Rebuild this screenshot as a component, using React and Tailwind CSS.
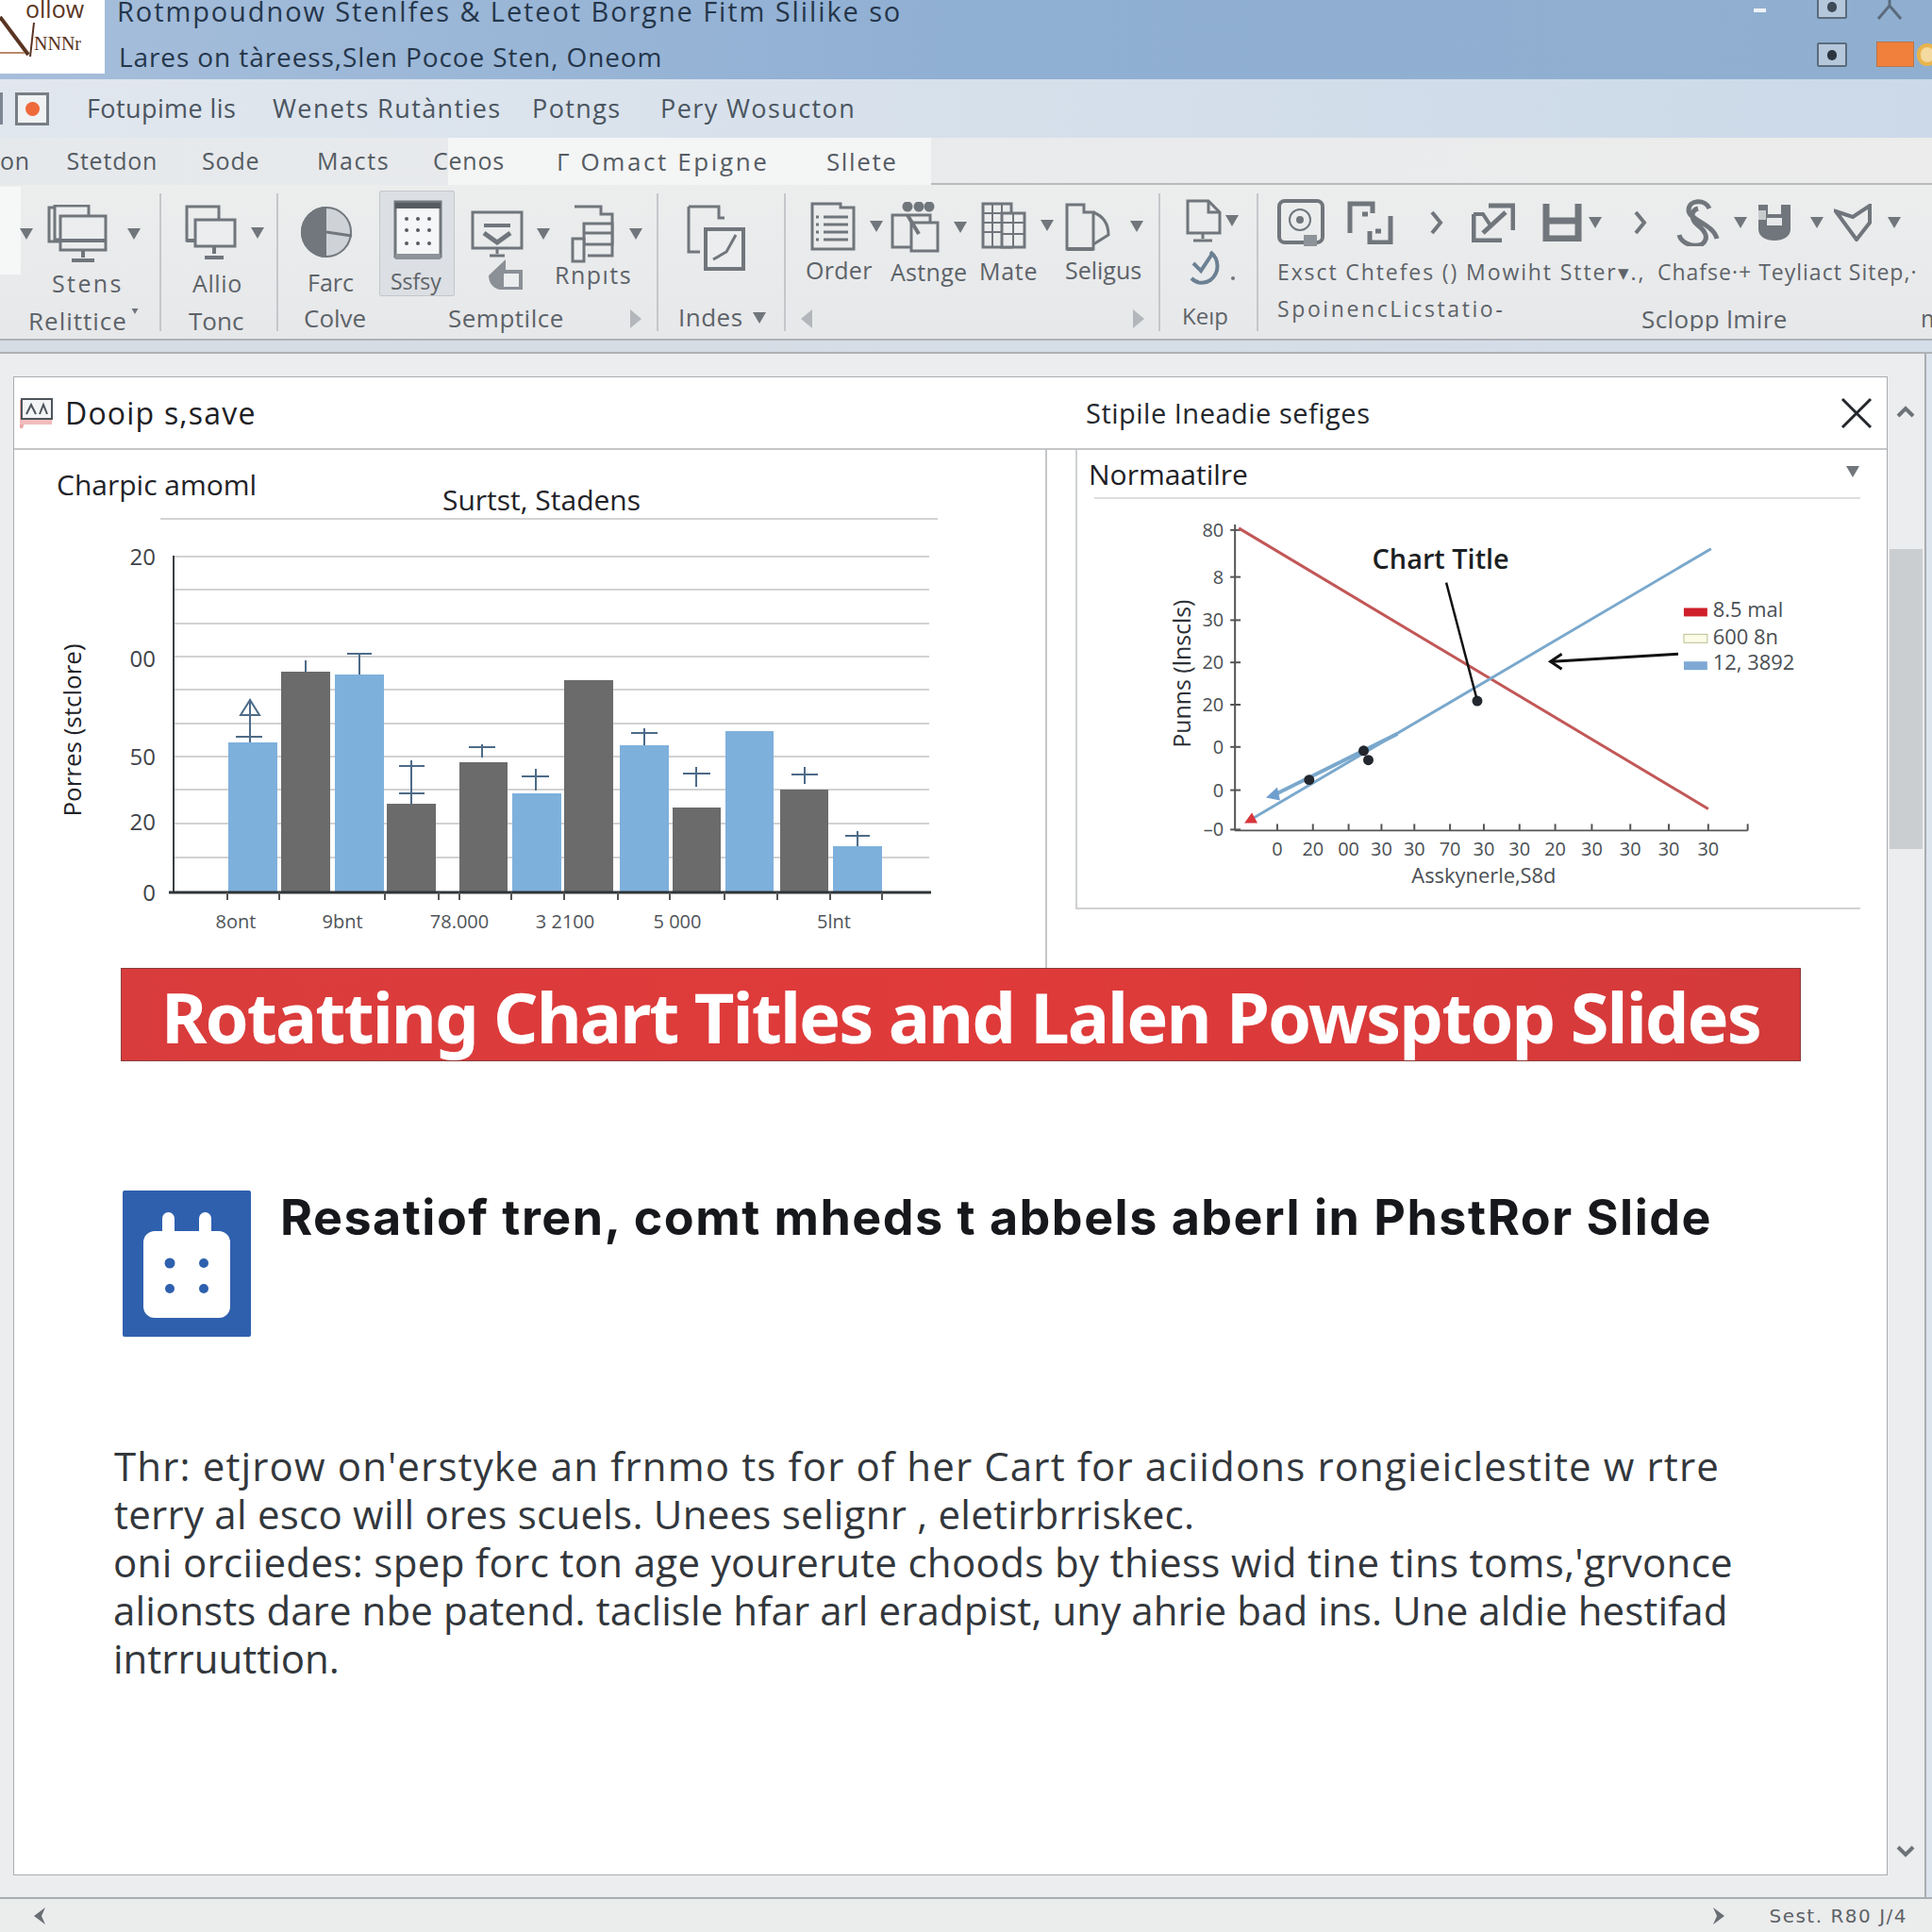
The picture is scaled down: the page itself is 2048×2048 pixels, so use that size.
import React from "react";

const Tri = ({ className = "" }) => (
  <svg width="16" height="14" viewBox="0 0 16 14" className={className}>
    <path d="M1 1h14L8 13z" fill="#70767c" />
  </svg>
);

const Ico = ({ w = 60, h = 66, children, className = "" }) => (
  <svg width={w} height={h} viewBox={`0 0 ${w} ${h}`} fill="none" stroke="#70767c" strokeWidth="3" className={className}>
    {children}
  </svg>
);

const StackMonitor = () => (
  <Ico w={64} h={62}>
    <rect x="2" y="3" width="36" height="36" />
    <rect x="8" y="1" width="36" height="36" fill="#ecedee" />
    <rect x="14" y="12" width="48" height="36" fill="#ecedee" />
    <path d="M14 38h48M38 48v8M26 59h24" strokeWidth="4" />
  </Ico>
);
const SmallMonitor = () => (
  <Ico w={56} h={60}>
    <rect x="3" y="2" width="34" height="36" />
    <rect x="12" y="16" width="42" height="28" fill="#ecedee" />
    <path d="M3 38h9M32 44v8M22 56h20" strokeWidth="4" />
  </Ico>
);
const Pie = () => (
  <svg width="56" height="58" viewBox="0 0 56 58">
    <circle cx="28" cy="29" r="27" fill="#cfd3d7" />
    <path d="M28 2a27 27 0 0 0 0 54z" fill="#71777d" />
    <path d="M28 29L55 33" stroke="#71777d" strokeWidth="3" />
    <circle cx="28" cy="29" r="26" fill="none" stroke="#71777d" strokeWidth="2" />
  </svg>
);
const Sheet = () => (
  <svg width="52" height="66" viewBox="0 0 52 66" fill="none">
    <rect x="2" y="2" width="48" height="58" fill="#f5f6f7" stroke="#70767c" strokeWidth="3" />
    <path d="M2 6h48" stroke="#555b61" strokeWidth="6" />
    <path d="M2 60h48" stroke="#8d9399" strokeWidth="6" />
    {[14, 26, 38].map((x) =>
      [20, 32, 46].map((y) => <circle key={`${x}-${y}`} cx={x} cy={y} r="2" fill="#555b61" />)
    )}
  </svg>
);
const MonitorCheck = () => (
  <Ico w={56} h={50}>
    <rect x="2" y="2" width="52" height="38" />
    <path d="M14 16h28" strokeWidth="4" />
    <path d="M14 24l14 10 14-10" strokeWidth="5" />
    <path d="M28 40v6M20 48h16" />
  </Ico>
);
const DocBox = () => (
  <Ico w={46} h={62}>
    <path d="M4 2h28v8h12v44H18" />
    <rect x="14" y="20" width="30" height="22" fill="#ecedee" />
    <path d="M14 30h30" />
    <rect x="2" y="36" width="12" height="24" fill="#ecedee" />
  </Ico>
);
const Hand = () => (
  <svg width="40" height="34" viewBox="0 0 40 34">
    <path d="M20 1L2 18c0 9 6 14 12 15h24V12H20z" fill="#8a9096" />
    <rect x="18" y="16" width="16" height="14" fill="#ecedee" />
  </svg>
);
const DocPicture = () => (
  <Ico w={62} h={72}>
    <path d="M2 2h32v12h6M2 2v48h12" />
    <rect x="20" y="26" width="40" height="42" fill="#ecedee" strokeWidth="4" />
    <path d="M28 58l14-8 10-18" strokeWidth="3" />
  </Ico>
);
const Lines = () => (
  <Ico w={48} h={52}>
    <path d="M2 2h30v4h14v44H2z" />
    <path d="M14 16h26M14 24h26M14 32h26M14 40h26M6 16h3M6 24h3M6 32h3M6 40h3" />
  </Ico>
);
const People = () => (
  <Ico w={52} h={54}>
    <circle cx="18" cy="5" r="4" fill="#70767c" />
    <circle cx="30" cy="5" r="4" fill="#70767c" />
    <circle cx="41" cy="5" r="4" fill="#70767c" />
    <rect x="2" y="14" width="40" height="34" />
    <rect x="22" y="22" width="28" height="30" fill="#ecedee" />
    <path d="M18 14l12 20" strokeWidth="4" />
  </Ico>
);
const Table = () => (
  <Ico w={48} h={50}>
    <rect x="2" y="2" width="30" height="46" />
    <path d="M2 12h30M2 22h30M2 32h30M12 2v46M22 2v46" strokeWidth="2" />
    <rect x="22" y="12" width="24" height="36" fill="#ecedee" />
    <path d="M22 22h24M22 34h24M34 12v36" strokeWidth="2" />
  </Ico>
);
const Folder = () => (
  <Ico w={50} h={52}>
    <path d="M2 50V3h18v8h10v39z" />
    <path d="M30 11c10 4 16 12 16 24l-16 10" />
    <path d="M2 50h28" strokeWidth="4" />
  </Ico>
);
const DocStand = () => (
  <Ico w={40} h={46}>
    <path d="M2 2h22l12 12v22H2z" />
    <path d="M24 2v12h12M18 36v6M8 44h20" />
  </Ico>
);
const CheckRound = () => (
  <Ico w={40} h={40}>
    <path d="M26 4c10 8 10 22 0 30-6 4-14 4-20-2" stroke="#6b8093" strokeWidth="4" />
    <path d="M8 16l8 8 12-18" stroke="#6b8093" strokeWidth="4" />
  </Ico>
);
const Target = () => (
  <Ico w={50} h={50}>
    <rect x="2" y="2" width="46" height="44" rx="6" strokeWidth="4" />
    <circle cx="24" cy="22" r="11" strokeWidth="2" />
    <circle cx="24" cy="22" r="4" fill="#70767c" stroke="none" />
    <rect x="28" y="38" width="14" height="12" fill="#8d9399" stroke="none" />
  </Ico>
);
const Corners = () => (
  <Ico w={50} h={46}>
    <path d="M3 34V3h24v10M16 14h6M46 16v28H24v-12M30 32h6" strokeWidth="5" />
  </Ico>
);
const Expand = () => (
  <Ico w={46} h={42}>
    <path d="M2 12v28h30M18 3h26v26" strokeWidth="5" />
    <path d="M12 32l24-22" strokeWidth="5" />
    <path d="M2 12h10l8 12" strokeWidth="4" />
  </Ico>
);
const HBlock = () => (
  <Ico w={42} h={40}>
    <path d="M4 0v40M38 0v40M4 18h34M4 37h34" strokeWidth="7" />
  </Ico>
);
const SCurve = () => (
  <Ico w={48} h={50}>
    <path d="M36 10C32 0 14 0 14 12c0 10 26 14 30 30M24 10c-8 2-8 12 0 18 8 6 12 14 4 20-10 4-22-2-24-10" strokeWidth="5" />
  </Ico>
);
const Shield = () => (
  <svg width="38" height="42" viewBox="0 0 38 42">
    <path d="M2 2h10v10h14V2h10v26c0 8-8 12-17 12S2 36 2 28z" fill="#70767c" />
    <rect x="11" y="16" width="16" height="8" fill="#e6e8ea" />
    <rect x="2" y="8" width="8" height="10" fill="#c8cbce" />
  </svg>
);
const Dart = () => (
  <Ico w={42} h={40}>
    <path d="M2 8l18 6L38 2v18L24 38z" strokeWidth="4" />
  </Ico>
);
const Chev = () => (
  <svg width="14" height="26" viewBox="0 0 14 26" fill="none">
    <path d="M2 2l9 11-9 11" stroke="#70767c" strokeWidth="4" />
  </svg>
);

const LeftChart = () => {
  const bars = [
    [243, 52, 786, "b"], [299, 52, 711, "g"], [356, 52, 714, "b"], [411, 52, 851, "g"],
    [488, 51, 807, "g"], [544, 52, 840, "b"], [599, 52, 720, "g"], [658, 52, 789, "b"],
    [714, 51, 855, "g"], [770, 51, 774, "b"], [828, 51, 836, "g"], [884, 52, 896, "b"],
  ];
  const grid = [589, 624, 660, 695, 730, 766, 801, 836, 872, 908];
  const errs = [
    [266, 740, 786, 780, 251, 279], [325, 699, 711, 699, 325, 325], [382, 692, 714, 692, 369, 395],
    [437, 805, 851, 811, 424, 451], [512, 788, 802, 791, 498, 526], [569, 814, 837, 822, 554, 583],
    [684, 771, 789, 776, 670, 698], [739, 812, 833, 819, 725, 754], [854, 812, 830, 820, 840, 868],
    [910, 880, 896, 885, 897, 923],
  ];
  const ticks = [242, 297, 409, 466, 488, 543, 599, 656, 711, 769, 825, 881, 936];
  const yLabels = [["20", 598], ["00", 706], ["50", 810], ["20", 879], ["0", 954]];
  const xLabels = [["8ont", 251], ["9bnt", 364], ["78.000", 488], ["3 2100", 600], ["5 000", 719], ["5lnt", 885]];
  return (
    <svg width="1095" height="550" viewBox="14 476 1095 550" className="shrink-0">
      <text x="61" y="524" fontSize="30" fill="#1f2328">Charpic amoml</text>
      <text x="575" y="540" fontSize="30" fill="#1f2328" textAnchor="middle">Surtst, Stadens</text>
      <line x1="171" y1="549" x2="995" y2="549" stroke="#d3d3d3" strokeWidth="2" />
      {grid.map((y) => <line key={y} x1="185" y1={y} x2="986" y2={y} stroke="#d2d2d2" strokeWidth="2" />)}
      {bars.map(([x, w, y, c]) => <rect key={x} x={x} y={y} width={w} height={945 - y} fill={c === "b" ? "#7eb0dc" : "#6b6b6b"} />)}
      {errs.map(([x, y1, y2, cy, cx1, cx2]) => (
        <g key={x} stroke="#4d6b88" strokeWidth="2">
          <line x1={x} y1={y1} x2={x} y2={y2} />
          <line x1={cx1} y1={cy} x2={cx2} y2={cy} />
        </g>
      ))}
      <path d="M266 741l-10 16h20z" fill="none" stroke="#4d6b88" strokeWidth="2" />
      <line x1="424" y1="840" x2="451" y2="840" stroke="#4d6b88" strokeWidth="2" />
      <line x1="185" y1="588" x2="185" y2="945" stroke="#3a3f44" strokeWidth="2" />
      <line x1="180" y1="945" x2="988" y2="945" stroke="#2f3438" strokeWidth="3" />
      {ticks.map((x) => <line key={x} x1={x} y1="945" x2={x} y2="953" stroke="#555" strokeWidth="2" />)}
      {yLabels.map(([t, y]) => <text key={y} x="166" y={y} fontSize="24" fill="#3f444a" textAnchor="end">{t}</text>)}
      {xLabels.map(([t, x]) => <text key={x} x={x} y="983" fontSize="20" fill="#4f5459" textAnchor="middle">{t}</text>)}
      <text transform="translate(87 773) rotate(-90)" fontSize="26" fill="#1f2328" textAnchor="middle">Porres (stclore)</text>
    </svg>
  );
};

const RightChart = () => {
  const yLabels = [["80", 561], ["8", 611], ["30", 657], ["20", 702], ["20", 747], ["0", 792], ["0", 838], ["–0", 880]];
  const ticks = [1353, 1391, 1429, 1464, 1499, 1537, 1573, 1611, 1649, 1688, 1729, 1770, 1812];
  const labels = ["0", "20", "00", "30", "30", "70", "30", "30", "20", "30", "30", "30", "30"];
  return (
    <svg width="830" height="435" viewBox="1142 528 830 435" className="block">
      <line x1="1308" y1="555" x2="1308" y2="881" stroke="#555" strokeWidth="2" />
      <line x1="1308" y1="881" x2="1854" y2="881" stroke="#555" strokeWidth="2" />
      <line x1="1854" y1="874" x2="1854" y2="881" stroke="#555" strokeWidth="2" />
      {yLabels.map(([t, y]) => (
        <g key={y}>
          <line x1="1303" y1={y} x2="1314" y2={y} stroke="#555" strokeWidth="2" />
          <text x="1296" y={y + 7} fontSize="20" fill="#4a4f54" textAnchor="end">{t}</text>
        </g>
      ))}
      {ticks.map((x, i) => (
        <g key={x}>
          <line x1={x} y1="874" x2={x} y2="881" stroke="#555" strokeWidth="2" />
          <text x={x} y="908" fontSize="20" fill="#4a4f54" textAnchor="middle">{labels[i]}</text>
        </g>
      ))}
      <line x1="1312" y1="559" x2="1812" y2="858" stroke="#c25757" strokeWidth="3" />
      <line x1="1327" y1="868" x2="1815" y2="581" stroke="#7aa8cc" strokeWidth="3" />
      <line x1="1350" y1="843" x2="1481" y2="778" stroke="#7aa8cc" strokeWidth="4" />
      <path d="M1341 846l12-11 3 14z" fill="#6f9fcf" />
      <path d="M1318 873l8-11 6 11z" fill="#d8363c" />
      {[[1387, 827], [1445, 796], [1450, 806], [1566, 743]].map(([x, y]) => <circle key={x} cx={x} cy={y} r="5.5" fill="#23272e" />)}
      <text x="1527" y="602" fontSize="29" fontWeight="600" fill="#1c1f23" textAnchor="middle">Chart Title</text>
      <line x1="1533" y1="617" x2="1565" y2="739" stroke="#111" strokeWidth="2.5" />
      <line x1="1780" y1="693" x2="1646" y2="701" stroke="#111" strokeWidth="3" />
      <path d="M1656 693l-12 8 12 8" fill="none" stroke="#111" strokeWidth="3" />
      <rect x="1786" y="644" width="25" height="9" fill="#cf1f2a" />
      <rect x="1786" y="672" width="25" height="9" fill="#fbfbe8" stroke="#b9c08e" strokeWidth="1" />
      <rect x="1786" y="701" width="25" height="9" fill="#7fa9d4" />
      <text x="1817" y="654" fontSize="22" fill="#4a4f54">8.5 mal</text>
      <text x="1817" y="683" fontSize="22" fill="#4a4f54">600 8n</text>
      <text x="1817" y="710" fontSize="22" fill="#4a4f54">12, 3892</text>
      <text x="1573" y="937" fontSize="22" fill="#4a4f54" textAnchor="middle">Asskynerle,S8d</text>
      <text transform="translate(1261 714) rotate(-90)" fontSize="25" fill="#2d3136" textAnchor="middle">Punns (lnscls)</text>
    </svg>
  );
};

export default function App() {
  return (
    <div className="w-[2048px] h-[2048px] overflow-hidden flex flex-col bg-[#ecedee] font-['Open_Sans',sans-serif]">
      {/* title bar */}
      <div className="h-[84px] shrink-0 flex bg-gradient-to-r from-[#a6bedb] via-[#8fafd3] to-[#90afd0] overflow-hidden">
        <div className="relative w-[111px] h-[78px] bg-white shrink-0 overflow-hidden font-['Liberation_Serif',serif] text-[#5a3422] leading-none">
          <svg width="40" height="70" viewBox="0 0 40 70" fill="none" className="absolute left-0 top-0">
            <path d="M0 18l30 40" stroke="#5a3422" strokeWidth="4" />
            <path d="M32 60L36 24" stroke="#5a3422" strokeWidth="2" />
            <path d="M0 56h26" stroke="#b98a6a" strokeWidth="2" />
          </svg>
          <div className="text-[25px] pl-[27px] -mt-[3px] font-['Open_Sans',sans-serif]">ollow</div>
          <div className="text-[20px] pl-[36px] mt-[14px]">NNNr</div>
        </div>
        <div className="pl-[13px] text-[#25364a] text-[29px] tracking-[1.9px] leading-[50px] -mt-[13px] whitespace-nowrap">
          <div>Rotmpoudnow Stenlfes &amp; Leteot Borgne Fitm Slilike so</div>
          <div className="text-[28px] leading-[46px] tracking-[0.9px] pl-[2px]">Lares on tàreess,Slen Pocoe Sten, Oneom</div>
        </div>
        <div className="ml-auto relative w-[200px]">
          <div className="absolute left-[11px] top-[9px] w-[13px] h-[4px] bg-[#eef2f6]" />
          <div className="absolute left-[78px] -top-[6px] w-[32px] h-[26px] border-2 border-[#5b6b7c] bg-[#b5c7db] rounded-[2px] flex items-center justify-center"><div className="w-[10px] h-[11px] rounded-full bg-[#3d4a58]" /></div>
          <svg className="absolute left-[140px] top-0" width="30" height="22" viewBox="0 0 30 22" fill="none"><path d="M15 0v6L3 20M15 6l12 14" stroke="#5b6b7c" strokeWidth="3" /></svg>
          <div className="absolute left-[78px] top-[45px] w-[32px] h-[26px] border-2 border-[#5b6b7c] bg-[#b5c7db] rounded-[2px] flex items-center justify-center"><div className="w-[10px] h-[11px] rounded-full bg-[#2b3540]" /></div>
          <div className="absolute left-[141px] top-[44px] w-[40px] h-[27px] bg-[#f0803c] border border-[#b9764b]" />
          <div className="absolute left-[184px] top-[46px] w-[22px] h-[24px] rounded-full border-[4px] border-[#e8b44c] bg-[#f4d9a0]" />
        </div>
      </div>

      {/* menu row */}
      <div className="h-[62px] shrink-0 flex items-center bg-gradient-to-r from-[#e1e7ee] to-[#cbd9e8] text-[27px] tracking-[1.4px] text-[#4b5560] whitespace-nowrap">
        <div className="w-[3px] h-[34px] bg-[#7c8793]" />
        <div className="ml-[13px] w-[36px] h-[35px] border-[3px] border-[#777e85] bg-[#f1f2f3] flex items-center justify-center">
          <div className="w-[15px] h-[15px] rounded-full bg-[#ef6a3a]" />
        </div>
        <span className="ml-[40px] w-[197px] tracking-[0.4px]">Fotupime lis</span>
        <span className="w-[275px]">Wenets Rutànties</span>
        <span className="w-[136px]">Potngs</span>
        <span>Pery Wosucton</span>
      </div>

      {/* tabs */}
      <div className="h-[50px] shrink-0 flex text-[25px] tracking-[0.8px] text-[#555c63] bg-gradient-to-r from-[#e6e9ec] to-[#ececec] whitespace-nowrap">
        <div className="relative z-10 flex items-center w-[475px] shrink-0">
          <span className="w-[71px]">on</span>
          <span className="w-[145px]">Stetdon</span>
          <span className="w-[123px]">Sode</span>
          <span className="w-[124px] tracking-[1.6px]">Macts</span>
          <span className="-mr-[60px]">Cenos</span>
        </div>
        <div className="w-[512px] bg-[#f4f5f5] flex items-center pl-[115px] text-[26px]">
          <span className="w-[286px] tracking-[2.6px]">Γ Omact Epigne</span>
          <span className="tracking-[1.6px]">Sllete</span>
        </div>
        <div className="flex-1 border-b-2 border-[#b9bcbf]" />
      </div>

      {/* ribbon */}
      <div className="h-[165px] shrink-0 flex border-b-2 border-[#aeb2b6] text-[25px] text-[#5d6369] whitespace-nowrap bg-gradient-to-b from-[#eceded] to-[#e7e8ea]">
        <div className="w-[171px] shrink-0 relative mt-[9px] mb-[8px] border-r-2 border-[#c4c7ca]">
          <div className="absolute left-0 -top-[7px] w-[22px] h-[93px] bg-[#f6f7f7]" />
          <div className="relative flex items-center pt-[12px] pl-[20px]">
            <Tri />
            <div className="ml-[14px]"><StackMonitor /></div>
            <Tri className="ml-[20px]" />
          </div>
          <div className="relative pl-[55px] pt-[3px] tracking-[2.4px]">Stens</div>
          <div className="relative pl-[30px] pt-[1px] text-[26px] tracking-[1px] flex items-start">Relittice<Tri className="scale-50 mt-[2px]" /></div>
        </div>

        <div className="w-[124px] shrink-0 mt-[9px] mb-[8px] border-r-2 border-[#c4c7ca]">
          <div className="flex items-center pt-[12px] pl-[24px]">
            <SmallMonitor />
            <Tri className="ml-[14px]" />
          </div>
          <div className="pl-[33px] pt-[5px] tracking-[0.6px]">Allio</div>
          <div className="pl-[29px] pt-[1px] text-[26px]">Tonc</div>
        </div>

        <div className="w-[403px] shrink-0 mt-[9px] mb-[8px] border-r-2 border-[#c4c7ca]">
          <div className="flex h-[112px]">
            <div className="w-[107px] pl-[23px] pt-[12px]">
              <Pie />
              <div className="pl-[8px] pt-[6px]">Farc</div>
            </div>
            <div className="w-[80px] h-[112px] -mt-[3px] bg-[#dcdfe3] border border-[#c3c7cc] rounded-[2px] pl-[14px] pt-[9px]">
              <Sheet />
              <div className="text-[23px] -ml-[3px] pt-[3px]">Ssfsy</div>
            </div>
            <div className="pl-[17px] pt-[12px]">
              <div className="flex items-center">
                <MonitorCheck />
                <Tri className="ml-[13px]" />
                <div className="ml-[21px]"><DocBox /></div>
                <Tri className="ml-[15px]" />
              </div>
              <div className="flex items-center -mt-[8px]">
                <div className="ml-[17px]"><Hand /></div>
                <span className="ml-[32px] mt-[2px] tracking-[1.5px]">Rnpıts</span>
              </div>
            </div>
          </div>
          <div className="flex items-center text-[26px] pt-[1px]">
            <span className="pl-[27px] w-[180px]">Colve</span>
            <span className="w-[192px] tracking-[0.5px]">Semptilce</span>
            <svg width="14" height="22" viewBox="0 0 14 22"><path d="M1 1l12 10L1 21z" fill="#b3b7bb" /></svg>
          </div>
        </div>

        <div className="w-[135px] shrink-0 mt-[9px] mb-[8px] border-r-2 border-[#c4c7ca]">
          <div className="h-[112px] pl-[30px] pt-[12px]"><DocPicture /></div>
          <div className="flex items-center pl-[21px] text-[26px] tracking-[0.5px]">Indes<Tri className="ml-[9px]" /></div>
        </div>

        <div className="w-[397px] shrink-0 mt-[9px] mb-[8px] border-r-2 border-[#c4c7ca] flex flex-col">
          <div className="h-[112px] flex pl-[22px] pt-[9px]">
            <div className="w-[95px] pl-[4px]">
              <div className="flex items-center"><Lines /><Tri className="ml-[14px]" /></div>
              <div className="-ml-[5px] pt-[2px] tracking-[0.3px]">Order</div>
            </div>
            <div className="w-[87px] -ml-[6px]">
              <div className="flex items-center"><People /><Tri className="ml-[14px]" /></div>
              <div className="pt-[2px] tracking-[0.3px]">Astnge</div>
            </div>
            <div className="w-[86px] ml-[9px]">
              <div className="flex items-center"><Table /><Tri className="ml-[14px]" /></div>
              <div className="-ml-[2px] pt-[5px] tracking-[0.7px]">Mate</div>
            </div>
            <div className="w-[90px] ml-[3px]">
              <div className="flex items-center"><Folder /><Tri className="ml-[18px]" /></div>
              <div className="pt-[2px]">Seligus</div>
            </div>
          </div>
          <div className="flex items-center justify-between pl-[15px] pr-[14px] pt-[10px]">
            <svg width="14" height="22" viewBox="0 0 14 22"><path d="M13 1L1 11l12 10z" fill="#b3b7bb" /></svg>
            <svg width="14" height="22" viewBox="0 0 14 22"><path d="M1 1l12 10L1 21z" fill="#b3b7bb" /></svg>
          </div>
        </div>

        <div className="w-[104px] shrink-0 mt-[9px] mb-[8px] border-r-2 border-[#c4c7ca]">
          <div className="h-[112px] pl-[27px] pt-[6px]">
            <div className="flex items-center"><DocStand /><Tri className="ml-[1px]" /></div>
            <div className="flex items-end mt-[6px]"><CheckRound /><span className="ml-[8px] w-[4px] h-[4px] mb-[6px] rounded-full bg-[#70767c]" /></div>
          </div>
          <div className="pl-[23px] text-[24px]">Keıp</div>
        </div>

        <div className="flex-1 mt-[9px] mb-[8px] pl-[20px] overflow-hidden">
          <div className="flex items-center h-[58px] pt-[3px]">
            <Target />
            <div className="ml-[24px]"><Corners /></div>
            <div className="ml-[38px]"><Chev /></div>
            <div className="ml-[30px]"><Expand /></div>
            <div className="ml-[29px]"><HBlock /></div>
            <Tri className="ml-[6px]" />
            <div className="ml-[33px]"><Chev /></div>
            <div className="ml-[30px]"><SCurve /></div>
            <Tri className="ml-[13px]" />
            <div className="ml-[9px]"><Shield /></div>
            <Tri className="ml-[18px]" />
            <div className="ml-[10px]"><Dart /></div>
            <Tri className="ml-[14px]" />
          </div>
          <div className="flex text-[23px] pt-[8px] h-[45px] tracking-[1.9px]">
            <span className="w-[403px] shrink-0">Exsct Chtefes () Mowiht Stter▾.,</span>
            <span className="tracking-[1px]">Chafse·+ Teyliact Sitep,·</span>
          </div>
          <div className="flex pt-[2px] items-start">
            <span className="w-[386px] shrink-0 text-[23px] tracking-[2.6px]">SpoinencLicstatio‑</span>
            <span className="w-[296px] shrink-0 text-[26px] tracking-[0.4px] pt-[9px]">Sclopp lmire</span>
            <span className="pt-[9px]">m</span>
          </div>
        </div>
      </div>

      <div className="h-[14px] shrink-0 border-b-2 border-[#aeb2b6] bg-gradient-to-r from-[#d6dce3] to-[#d4dee9]" />

      {/* document frame */}
      <div className="h-[1636px] shrink-0 flex pt-[24px] bg-[#ecedee]">
        <div className="w-[14px] shrink-0" />
        <div className="w-[1987px] h-[1589px] shrink-0 flex flex-col bg-white border border-[#a9adb1]">
          <div className="h-[77px] shrink-0 flex items-center border-b-2 border-[#c4c6c8]">
            <div className="w-[1126px] flex items-center">
              <svg width="36" height="36" viewBox="0 0 36 36" className="ml-[5px]">
                <path d="M1 4h12v22H7l-3 8H1z" fill="#eda6a6" />
                <path d="M1 24h34v6H1z" fill="#f2bcbc" />
                <rect x="3" y="3" width="32" height="21" fill="#f3f4f5" stroke="#4d545b" strokeWidth="2" />
                <path d="M8 19l5-10 5 10M22 19l4-10 4 10" fill="none" stroke="#4d545b" strokeWidth="2" />
              </svg>
              <span className="ml-[13px] text-[32px] tracking-[1.2px] text-[#1d2025]">Dooip s,save</span>
            </div>
            <span className="pl-[10px] text-[29px] tracking-[0.5px] text-[#24282d]">Stipile Ineadie sefiges</span>
            <svg width="36" height="36" viewBox="0 0 36 36" fill="none" className="ml-auto mr-[14px]">
              <path d="M3 3l30 30M33 3L3 33" stroke="#23272b" strokeWidth="3" />
            </svg>
          </div>

          <div className="h-[549px] shrink-0 flex">
            <div className="-ml-[2px] border-r-2 border-[#c4c6c8] h-full"><LeftChart /></div>
            <div className="ml-[30px] w-[832px] h-[487px] border-l-2 border-b-2 border-[#cfd1d3] flex flex-col">
              <div className="h-[52px] shrink-0 flex items-center ml-[18px] border-b-2 border-[#dcdedf]">
                <span className="-ml-[6px] text-[30px] text-[#1d2025]">Normaatilre</span>
                <Tri className="ml-auto mb-[4px]" />
              </div>
              <RightChart />
            </div>
          </div>

          <div className="ml-[113px] w-[1781px] h-[99px] shrink-0 bg-gradient-to-r from-[#d93c3c] via-[#e03a3a] to-[#d43a3a] border border-[#8d3b3b] flex items-center justify-center pt-[4px]">
            <span className="text-white text-[74px] font-bold tracking-[-1.95px] font-['Noto_Sans',sans-serif] whitespace-nowrap">Rotatting Chart Titles and Lalen Powsptop Slides</span>
          </div>

          <div className="mt-[137px] ml-[115px] flex shrink-0">
            <div className="w-[136px] h-[155px] bg-[#2f60ae] rounded-[2px] flex items-center justify-center shrink-0">
              <svg width="92" height="112" viewBox="0 0 92 112" className="mt-[2px]">
                <rect x="0" y="20" width="92" height="92" rx="12" fill="#fff" />
                <rect x="20" y="0" width="13" height="40" rx="6.5" fill="#fff" />
                <rect x="59" y="0" width="13" height="40" rx="6.5" fill="#fff" />
                <circle cx="28" cy="54" r="5.5" fill="#2f60ae" />
                <circle cx="64" cy="54" r="5" fill="#2f60ae" />
                <circle cx="28" cy="81" r="5" fill="#2f60ae" />
                <circle cx="64" cy="81" r="5" fill="#2f60ae" />
              </svg>
            </div>
            <div className="ml-[31px] text-[52px] font-bold tracking-[1.5px] text-[#16181b] leading-none pt-[3px] font-['Inter',sans-serif] whitespace-nowrap">Resatiof tren, comt mheds t abbels aberl in PhstRor Slide</div>
          </div>

          <div className="mt-[111px] ml-[105px] text-[42px] leading-[51px] text-[#33373c] whitespace-nowrap">
            <div className="pl-[1px] tracking-[1.14px]">Thr: etjrow on'erstyke an frnmo ts for of her Cart for aciidons rongieiclestite w rtre</div>
            <div className="pl-[1px] tracking-[0.25px]">terry al esco will ores scuels. Unees selignr , eletirbrriskec.</div>
            <div className="tracking-[0.35px]">oni orciiedes: spep forc ton age yourerute choods by thiess wid tine tins toms,'grvonce</div>
            <div className="tracking-[0.1px]">alionsts dare nbe patend. taclisle hfar arl eradpist, uny ahrie bad ins. Une aldie hestifad</div>
            <div>intrruuttion.</div>
          </div>
        </div>

        <div className="w-[39px] shrink-0 h-[1589px] flex flex-col items-center">
          <svg width="22" height="14" viewBox="0 0 22 14" fill="none" className="mt-[30px] -ml-[2px]"><path d="M3 12l8-8 8 8" stroke="#6d7378" strokeWidth="4" /></svg>
          <div className="w-[35px] h-[318px] mt-[139px] bg-[#cbced1]" />
          <svg width="22" height="14" viewBox="0 0 22 14" fill="none" className="mt-auto mb-[18px] -ml-[2px]"><path d="M3 2l8 8 8-8" stroke="#6d7378" strokeWidth="4" /></svg>
        </div>
        <div className="flex-1 border-l-2 border-[#a9adb1] bg-[#dbe3ec] -mt-[24px]" />
      </div>

      {/* status bar */}
      <div className="flex-1 flex items-center border-t-2 border-[#a9adb1] bg-[#ebecec] font-['DejaVu_Sans',sans-serif] text-[20px] tracking-[1.5px] text-[#5d6368]">
        <svg width="18" height="20" viewBox="0 0 18 20" className="ml-[33px]"><path d="M15 1L3 10l12 9-4-9z" fill="#686e73" /></svg>
        <svg width="18" height="20" viewBox="0 0 18 20" className="ml-auto"><path d="M3 1l12 9-12 9 4-9z" fill="#686e73" /></svg>
        <span className="ml-[44px] mr-[26px] whitespace-nowrap">Sest. R80 J/4</span>
      </div>
    </div>
  );
}
